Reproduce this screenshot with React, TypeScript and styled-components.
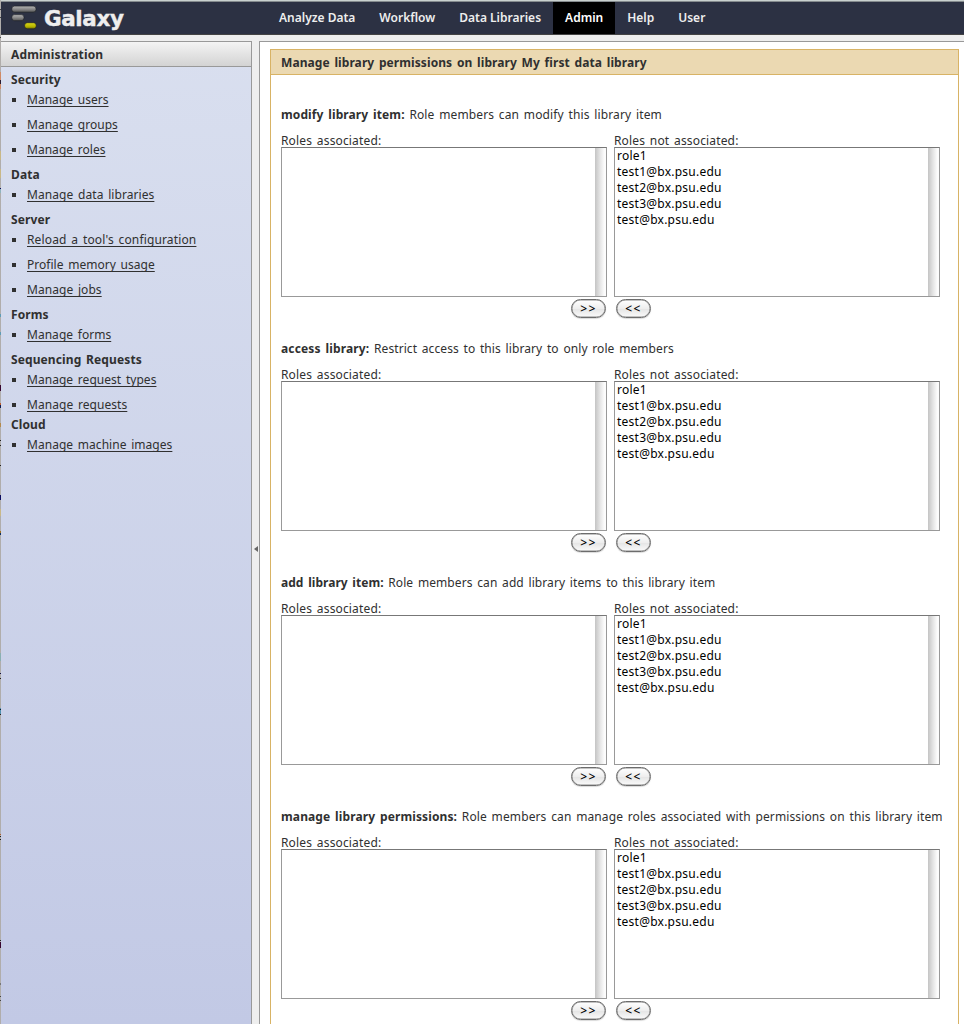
import React from "react";
import styled, { createGlobalStyle } from "styled-components";

const Global = createGlobalStyle`
  * { box-sizing: border-box; }
  body { margin: 0; background: #eee; }
  #root { height: 1024px; overflow: hidden; }
`;

const Window = styled.div`
  width: 964px;
  height: 1024px;
  display: flex;
  overflow: hidden;
`;

const WindowEdge = styled.div`
  flex: none;
  width: 1px;
  background: #b0adab;
`;

const EdgeMark = styled.div<{ $gap: number; $size: number; $color: string }>`
  height: ${(p) => p.$size}px;
  margin-top: ${(p) => p.$gap}px;
  background: ${(p) => p.$color};
`;

const Page = styled.div`
  flex: 1;
  min-width: 0;
  display: flex;
  flex-direction: column;
  background: #eeeeee;
  color: #303030;
  font: 12px/16px "Noto Sans", "Open Sans", sans-serif;
  letter-spacing: 0.1px;
  word-spacing: 1.5px;
`;

const WindowTop = styled.div`
  flex: none;
  height: 2px;
  background: #c8d0ce;
  border-bottom: 1px solid #858b8e;
`;

const Masthead = styled.header`
  flex: none;
  height: 33px;
  display: flex;
  align-items: stretch;
  border-bottom: 1px solid #444444;
  background: #2c3143;
  color: #eeeeee;
`;

const Brand = styled.div`
  width: 266px;
  display: flex;
  align-items: center;
  padding-left: 10px;
  gap: 7px;
`;

const BrandName = styled.span`
  position: relative;
  top: 1px;
  font: bold 21.5px/32px "DejaVu Sans", sans-serif;
  letter-spacing: -0.4px;
  -webkit-text-stroke: 0.4px #eee;
`;

const NavItem = styled.a<{ $active?: boolean }>`
  display: flex;
  align-items: center;
  padding: 0 12px;
  font-weight: 600;
  letter-spacing: 0;
  word-spacing: 0;
  background: ${(p) => (p.$active ? "#000" : "transparent")};
  color: ${(p) => (p.$active ? "#fff" : "#eee")};
`;

const Columns = styled.div`
  flex: 1;
  min-height: 0;
  display: flex;
  padding-top: 6px;
`;

const Sidebar = styled.aside`
  width: 251px;
  border: solid #999;
  border-width: 1px 1px 0 0;
  background: linear-gradient(#d9dfef, #c2c9e5);
`;

const SidebarHeader = styled.div`
  height: 25px;
  padding: 0 10px;
  border-bottom: 1px solid #999;
  background: linear-gradient(#f4f4f4, #d3d3d3);
  font-weight: bold;
  line-height: 25px;
  letter-spacing: 0.15px;
`;

const SidebarBody = styled.nav`
  padding: 3px 10px;
`;

const GroupTitle = styled.div`
  height: 20px;
  line-height: 20px;
  font-weight: bold;
  letter-spacing: 0.11px;
`;

const Group = styled.ul<{ $tight?: boolean }>`
  margin: 0;
  padding: 0 0 ${(p) => (p.$tight ? 0 : 5)}px;
  list-style: none;
  display: flex;
  flex-direction: column;
  gap: 5px;
`;

const GroupItem = styled.li<{ $track: number }>`
  display: flex;
  align-items: center;
  height: 20px;
  gap: 11px;
  letter-spacing: ${(p) => p.$track}px;
  &::before {
    content: "";
    width: 4px;
    height: 4px;
    margin-left: 1px;
    background: #303030;
  }
`;

const Link = styled.a`
  text-decoration: underline;
  text-underline-offset: 2px;
  text-decoration-skip-ink: none;
  text-decoration-thickness: 1px;
`;

const Divider = styled.div`
  width: 7px;
  display: flex;
  align-items: center;
  justify-content: center;
  padding-top: 32px;
`;

const Center = styled.main`
  flex: 1;
  min-width: 0;
  border: solid #999;
  border-width: 1px 0 0 1px;
  background: #fff;
  padding: 7px 5px 0 10px;
`;

const Form = styled.section`
  height: 1100px;
  border: 1px solid #d8b365;
`;

const FormTitle = styled.h1`
  margin: 0;
  height: 25px;
  padding: 0 10px;
  border-bottom: 1px solid #d8b365;
  background: #ebd9b2;
  font-size: 12px;
  line-height: 25px;
  letter-spacing: 0.08px;
`;

const FormBody = styled.div`
  padding: 32px 0 0 10px;
`;

const Permission = styled.div`
  height: 234px;
`;

const Description = styled.div<{ $track: number }>`
  height: 16px;
  margin-bottom: 10px;
  white-space: nowrap;
  letter-spacing: ${(p) => p.$track}px;
`;

const PermissionName = styled.b<{ $track: number }>`
  letter-spacing: ${(p) => p.$track}px;
`;

const Lists = styled.div`
  display: flex;
  gap: 7px;
`;

const ListColumn = styled.div<{ $end?: boolean }>`
  width: 326px;
  display: flex;
  flex-direction: column;
  align-items: ${(p) => (p.$end ? "flex-end" : "flex-start")};
`;

const ListLabel = styled.div`
  align-self: flex-start;
  height: 14px;
  line-height: 15px;
  letter-spacing: 0.15px;
`;

const ListBox = styled.div`
  width: 326px;
  height: 150px;
  display: flex;
  justify-content: space-between;
  border: 1px solid #999;
  border-top-color: #777;
  background: #fff;
  color: #000;
`;

const Options = styled.div`
  padding: 0 2px;
  letter-spacing: 0.24px;
`;

const Option = styled.div`
  height: 16px;
`;

const Track = styled.div`
  width: 11px;
  background: linear-gradient(90deg, #c4c4c4, #e4e4e4 45%, #fcfcfc 85%);
`;

const MoveButton = styled.button`
  width: 35px;
  height: 19px;
  margin: 2px 1.5px 0;
  padding: 0;
  border: 1px solid #6c6c6c;
  border-radius: 10px;
  background: linear-gradient(#fff, #eee 50%, #e4e4e4 51%, #fafafa);
  box-shadow: inset 0 0 0 0.5px #8a8a8a, 0 1px 1px rgba(0, 0, 0, 0.15);
  color: #000;
  font: 500 12px/16px "Noto Sans", sans-serif;
  letter-spacing: 1.5px;
  text-indent: 1px;
`;

const Logo = () => (
  <svg width="26" height="26" viewBox="0 0 26 26">
    <defs>
      <linearGradient id="grey" x1="0" y1="0" x2="0" y2="1">
        <stop offset="0" stopColor="#b4b4b4" />
        <stop offset="0.5" stopColor="#8a8a8a" />
        <stop offset="1" stopColor="#555" />
      </linearGradient>
      <linearGradient id="gold" x1="0" y1="0" x2="0" y2="1">
        <stop offset="0" stopColor="#d8d61c" />
        <stop offset="0.6" stopColor="#bab800" />
        <stop offset="1" stopColor="#777600" />
      </linearGradient>
    </defs>
    <g stroke="#1a1c22" strokeWidth="0.6">
      <rect x="0.8" y="1.1" width="24.2" height="6.1" rx="2.8" fill="url(#grey)" />
      <rect x="0.8" y="9.6" width="12.2" height="6.1" rx="2.8" fill="url(#grey)" />
      <rect x="13.6" y="17.7" width="11.6" height="6.1" rx="2.8" fill="url(#gold)" />
    </g>
  </svg>
);

const nav = [
  { label: "Analyze Data" },
  { label: "Workflow" },
  { label: "Data Libraries" },
  { label: "Admin", active: true },
  { label: "Help" },
  { label: "User" },
];

type Entry = [label: string, track: number];
const groups: { title: string; items: Entry[]; tight?: boolean }[] = [
  { title: "Security", items: [["Manage users", 0.03], ["Manage groups", 0.03], ["Manage roles", 0.03]] },
  { title: "Data", items: [["Manage data libraries", 0.07]] },
  { title: "Server", items: [["Reload a tool's configuration", 0.14], ["Profile memory usage", 0.03], ["Manage jobs", 0.06]] },
  { title: "Forms", items: [["Manage forms", 0.03]] },
  { title: "Sequencing Requests", items: [["Manage request types", 0.04], ["Manage requests", 0.06]], tight: true },
  { title: "Cloud", items: [["Manage machine images", 0.04]] },
];

const permissions = [
  { name: "modify library item:", nameTrack: 0.11, text: "Role members can modify this library item", track: 0.12 },
  { name: "access library:", nameTrack: 0.15, text: "Restrict access to this library to only role members", track: 0.08 },
  { name: "add library item:", nameTrack: 0.04, text: "Role members can add library items to this library item", track: 0.08 },
  {
    name: "manage library permissions:",
    nameTrack: 0.12,
    text: "Role members can manage roles associated with permissions on this library item",
    track: 0.11,
  },
];

const roles = ["role1", "test1@bx.psu.edu", "test2@bx.psu.edu", "test3@bx.psu.edu", "test@bx.psu.edu"];

/* Specks along the window's left edge: [gap above, height, colour]. */
const edgeMarks: [number, number, string][] = [
  [9, 1, "#444"],
  [7, 1, "#444"],
  [19, 1, "#444"],
  [34, 8, "#d08a66"],
  [0, 4, "#2a1c30"],
  [0, 5, "#d08a66"],
  [62, 9, "#c9b887"],
  [9, 9, "#c9b887"],
  [10, 1, "#101060"],
  [0, 4, "#8fb4bd"],
  [121, 3, "#5f9cb4"],
  [15, 3, "#5f9cb4"],
  [50, 6, "#38062f"],
  [12, 2, "#c06030"],
  [0, 3, "#101c50"],
  [15, 4, "#b58a4c"],
  [13, 1, "#222"],
  [4, 1, "#222"],
  [19, 1, "#222"],
  [29, 5, "#0c0c60"],
  [9, 7, "#c9b887"],
  [15, 2, "#a07020"],
  [0, 2, "#103060"],
  [118, 8, "#8ab0b2"],
  [12, 1, "#101040"],
  [4, 1, "#222"],
  [29, 1, "#5090b0"],
  [0, 1, "#101c30"],
  [0, 4, "#5090b0"],
  [0, 1, "#222"],
  [119, 1, "#b06030"],
  [1, 1, "#222"],
  [2, 1, "#222"],
  [100, 1, "#222"],
  [1, 6, "#38062f"],
  [35, 2, "#777"],
  [11, 1, "#444"],
  [3, 1, "#444"],
];

export default function App() {
  return (
    <Window>
      <Global />
      <WindowEdge>
        {edgeMarks.map(([gap, size, color], i) => (
          <EdgeMark key={i} $gap={gap} $size={size} $color={color} />
        ))}
      </WindowEdge>
      <Page>
        <WindowTop />
        <Masthead>
          <Brand>
            <Logo />
            <BrandName>Galaxy</BrandName>
          </Brand>
          {nav.map((n) => (
            <NavItem key={n.label} $active={n.active}>{n.label}</NavItem>
          ))}
        </Masthead>
        <Columns>
          <Sidebar>
            <SidebarHeader>Administration</SidebarHeader>
            <SidebarBody>
              {groups.map((g) => (
                <React.Fragment key={g.title}>
                  <GroupTitle>{g.title}</GroupTitle>
                  <Group $tight={g.tight}>
                    {g.items.map(([label, track]) => (
                      <GroupItem key={label} $track={track}><Link>{label}</Link></GroupItem>
                    ))}
                  </Group>
                </React.Fragment>
              ))}
            </SidebarBody>
          </Sidebar>
          <Divider>
            <svg width="4" height="6" viewBox="0 0 4 6"><path d="M0 3 4 0V6Z" fill="#666" /></svg>
          </Divider>
          <Center>
            <Form>
              <FormTitle>Manage library permissions on library My first data library</FormTitle>
              <FormBody>
                {permissions.map((p) => (
                  <Permission key={p.name}>
                    <Description $track={p.track}>
                      <PermissionName $track={p.nameTrack}>{p.name}</PermissionName> {p.text}
                    </Description>
                    <Lists>
                      <ListColumn $end>
                        <ListLabel>Roles associated:</ListLabel>
                        <ListBox><Options /><Track /></ListBox>
                        <MoveButton>&gt;&gt;</MoveButton>
                      </ListColumn>
                      <ListColumn>
                        <ListLabel>Roles not associated:</ListLabel>
                        <ListBox>
                          <Options>
                            {roles.map((r) => <Option key={r}>{r}</Option>)}
                          </Options>
                          <Track />
                        </ListBox>
                        <MoveButton>&lt;&lt;</MoveButton>
                      </ListColumn>
                    </Lists>
                  </Permission>
                ))}
              </FormBody>
            </Form>
          </Center>
        </Columns>
      </Page>
    </Window>
  );
}
